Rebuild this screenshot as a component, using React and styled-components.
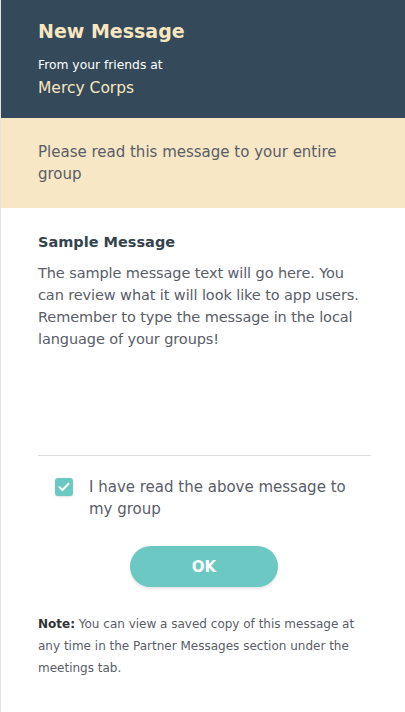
import React from 'react';
import styled, { createGlobalStyle } from 'styled-components';

const Global = createGlobalStyle`
  html, body {
    margin: 0;
    padding: 0;
    background: #fff;
  }
  body {
    font-family: "DejaVu Sans", "Noto Sans", sans-serif;
  }
`;

const Page = styled.div`
  width: 405px;
  min-height: 712px;
  box-sizing: border-box;
  border-left: 1px solid #e4e4dc;
  background: #fff;
`;

const Header = styled.header`
  background: #34495a;
  padding: 17px 37px 20px;
  height: 118px;
  box-sizing: border-box;
`;

const Title = styled.h1`
  margin: 0;
  font-size: 19px;
  font-weight: 700;
  color: #f8e6bf;
  line-height: 28px;
`;

const From = styled.div`
  margin-top: 11px;
  font-size: 12.3px;
  color: #fff;
  line-height: 18px;
`;

const Org = styled.div`
  margin-top: 3px;
  font-size: 15.5px;
  color: #f8e6bf;
  line-height: 22px;
`;

const Banner = styled.div`
  background: #f7e7c4;
  height: 90px;
  box-sizing: border-box;
  padding: 23px 60px 0 37px;
  font-size: 15px;
  line-height: 22px;
  color: #5a5d68;
`;

const Body = styled.section`
  padding: 23px 34px 0 37px;
`;

const Heading = styled.h2`
  margin: 0;
  font-size: 14.5px;
  font-weight: 700;
  color: #34444f;
  line-height: 22px;
`;

const Text = styled.p`
  margin: 9px 0 0;
  font-size: 14.5px;
  letter-spacing: -0.1px;
  line-height: 22px;
  color: #5a5d68;
  height: 193px;
`;

const Divider = styled.hr`
  margin: 0;
  border: 0;
  border-top: 1px solid #dcdcdc;
`;

const CheckRow = styled.label`
  display: flex;
  align-items: flex-start;
  gap: 16px;
  margin: 20px 0 0 17px;
  font-size: 15px;
  line-height: 22px;
  color: #5a5d68;
`;

const Box = styled.span`
  flex: none;
  width: 18px;
  height: 18px;
  margin-top: 2px;
  border-radius: 3px;
  background: #6bc8c2;
  display: flex;
  align-items: center;
  justify-content: center;
  box-shadow: 0 1px 2px rgba(0, 0, 0, 0.12);
`;

const ButtonRow = styled.div`
  display: flex;
  justify-content: center;
  margin-top: 26px;
  padding-right: 1px;
`;

const OkButton = styled.button`
  width: 148px;
  height: 41px;
  border: 0;
  border-radius: 21px;
  background: #6bc8c2;
  color: #fff;
  font-family: inherit;
  font-size: 15px;
  font-weight: 700;
  box-shadow: 0 2px 3px rgba(0, 0, 0, 0.1);
`;

const Note = styled.p`
  margin: 26px 0 0;
  font-size: 12px;
  line-height: 22px;
  color: #5a5d68;

  b {
    color: #333;
  }
`;

export default function App() {
  return (
    <>
      <Global />
      <Page>
        <Header>
          <Title>New Message</Title>
          <From>From your friends at</From>
          <Org>Mercy Corps</Org>
        </Header>
        <Banner>Please read this message to your entire group</Banner>
        <Body>
          <Heading>Sample Message</Heading>
          <Text>
            The sample message text will go here. You can review what it will look like to app users.
            Remember to type the message in the local language of your groups!
          </Text>
          <Divider />
          <CheckRow>
            <Box>
              <svg width="12" height="10" viewBox="0 0 12 10" fill="none">
                <path d="M1.5 5.2 4.5 8 10.5 1.8" stroke="#fff" strokeWidth="2" strokeLinecap="round" strokeLinejoin="round" />
              </svg>
            </Box>
            <span>I have read the above message to my group</span>
          </CheckRow>
          <ButtonRow>
            <OkButton>OK</OkButton>
          </ButtonRow>
          <Note>
            <b>Note:</b> You can view a saved copy of this message at any time in the Partner Messages section under the meetings tab.
          </Note>
        </Body>
      </Page>
    </>
  );
}
